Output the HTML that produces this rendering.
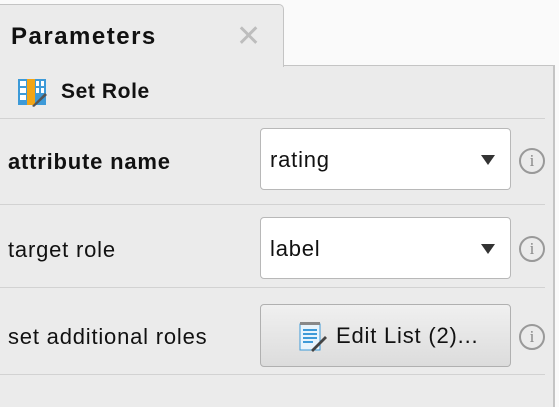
<!DOCTYPE html>
<html><head><style>
body{margin:0;width:559px;height:406px;background:#fafafa;font-family:"Liberation Sans",sans-serif;position:relative;overflow:hidden}
.panel{position:absolute;left:0;top:65px;width:553px;height:341px;background:#ebebeb;border-right:2px solid #c4c4c4;border-top:1px solid #c4c4c4}
.tab{position:absolute;left:0;top:4px;width:283px;height:62px;background:#ebebeb;border:1px solid #c4c4c4;border-left:none;border-bottom:none;border-radius:0 5px 0 0;z-index:2}
.tab .t{position:absolute;left:11px;top:18px;font-size:24px;letter-spacing:1.5px;font-weight:bold;color:#111}
.tab .x{position:absolute;left:236px;top:14px;font-size:30px;color:#bdbdbd}
.hdr{position:absolute;left:61px;top:80px;font-size:21px;letter-spacing:0.6px;font-weight:bold;color:#111;z-index:3}
.sep{position:absolute;left:0;width:545px;height:1px;background:#d2d2d2;z-index:3}
.lbl{position:absolute;left:8px;font-size:22px;letter-spacing:0.8px;color:#111;z-index:3}
.dd{position:absolute;left:260px;width:249px;height:60px;background:#fff;border:1px solid #b8b8b8;border-radius:4px;z-index:3}
.dd span{position:absolute;left:9px;top:18px;font-size:22px;letter-spacing:0.8px;color:#111}
.dd i{position:absolute;right:15px;top:26px;width:0;height:0;border-left:7px solid transparent;border-right:7px solid transparent;border-top:10px solid #333}
.btn{position:absolute;left:260px;top:304px;width:249px;height:61px;border:1px solid #b0b0b0;border-radius:4px;background:linear-gradient(#f0f0f0,#dcdcdc);z-index:3}
.btn span{position:absolute;left:75px;top:18px;font-size:22px;letter-spacing:0.8px;color:#111}
.info{position:absolute;left:519px;width:22px;height:22px;border:2px solid #999;border-radius:50%;color:#888;font-size:17px;font-family:"Liberation Serif",serif;text-align:center;line-height:22px;z-index:3}
</style></head><body>
<div class="panel"></div>
<div class="tab"><div class="t">Parameters</div><div class="x">✕</div></div>
<svg style="position:absolute;left:18px;top:79px;z-index:3" width="30" height="28" viewBox="0 0 30 28">
<rect x="0" y="0" width="28" height="26" fill="#3d9ad8"/>
<g fill="#fff"><rect x="2" y="2" width="6" height="5"/><rect x="2" y="9" width="6" height="5"/><rect x="2" y="16" width="6" height="5"/><rect x="18" y="2" width="3" height="5"/><rect x="23" y="2" width="3" height="5"/><rect x="18" y="9" width="3" height="5"/><rect x="23" y="9" width="3" height="5"/></g>
<rect x="9" y="0" width="8" height="26" fill="#f2a516"/>
<path d="M14 27 L27 14 L29 16 L16 28 Z" fill="#555"/>
</svg>
<div class="hdr">Set Role</div>
<div class="sep" style="top:118px"></div>
<div class="lbl" style="top:149px;font-weight:bold">attribute name</div>
<div class="dd" style="top:128px"><span>rating</span><i></i></div>
<div class="info" style="top:148px">i</div>
<div class="sep" style="top:204px"></div>
<div class="lbl" style="top:237px">target role</div>
<div class="dd" style="top:217px"><span>label</span><i></i></div>
<div class="info" style="top:236px">i</div>
<div class="sep" style="top:287px"></div>
<div class="lbl" style="top:324px">set additional roles</div>
<div class="btn">
<svg style="position:absolute;left:38px;top:17px" width="28" height="30" viewBox="0 0 28 30">
<rect x="1" y="2" width="20" height="26" fill="#e8f4fc" stroke="#3d9ad8"/>
<g stroke="#3d9ad8" stroke-width="2"><line x1="4" y1="8" x2="18" y2="8"/><line x1="4" y1="12" x2="18" y2="12"/><line x1="4" y1="16" x2="18" y2="16"/><line x1="4" y1="20" x2="14" y2="20"/></g>
<rect x="1" y="0" width="20" height="3" fill="#888"/>
<path d="M12 28 L26 14 L28 16 L14 30 Z" fill="#444"/>
</svg>
<span>Edit List (2)...</span></div>
<div class="info" style="top:324px">i</div>
<div class="sep" style="top:374px"></div>
</body></html>
